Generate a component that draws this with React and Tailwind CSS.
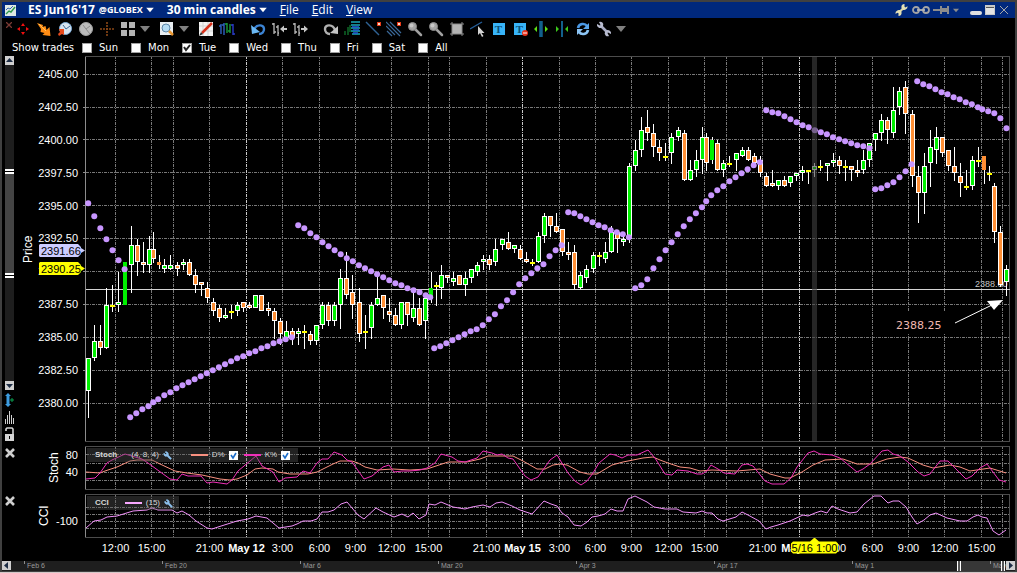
import React from 'react';
import clsx from 'clsx';
import { Wrench } from 'lucide-react';

const GRID_X = [115, 151, 173, 209, 246, 282, 319, 355, 391, 428, 449, 486, 522, 559, 595, 631, 668, 704, 726, 762, 799, 835, 872, 908, 944, 981, 1002];
const DAY_START = [246, 522, 799];
const PRICE_Y = [74, 107, 139, 172, 205, 238, 271, 304, 337, 370, 403];
const PRICES = ['2405.00', '2402.50', '2400.00', '2397.50', '2395.00', '2392.50', '2390.00', '2387.50', '2385.00', '2382.50', '2380.00'];
const DAYS = ['Sun', 'Mon', 'Tue', 'Wed', 'Thu', 'Fri', 'Sat', 'All'];
const RANGE = ['Feb 6', 'Feb 20', 'Mar 6', 'Mar 20', 'Apr 3', 'Apr 17', 'May 1', 'May 15'];

const TIMES = [
    [115, '12:00'], [151, '15:00'], [209, '21:00'], [246, 'May 12'], [282, '3:00'], [319, '6:00'], [355, '9:00'],
    [391, '12:00'], [428, '15:00'], [486, '21:00'], [522, 'May 15'], [559, '3:00'], [595, '6:00'], [631, '9:00'],
    [668, '12:00'], [704, '15:00'], [762, '21:00'], [799, 'May 16'], [835, '3:00'], [872, '6:00'], [908, '9:00'],
    [944, '12:00'], [981, '15:00'],
];

// x, kind (G up, O down, Y flat, g/o without outline), high, top, bottom, low
const CANDLES = [
    [88, 'G', 358, 358, 391, 418], [94, 'G', 325, 341, 358, 361], [100, 'O', 325, 341, 348, 355], [106, 'G', 288, 305, 348, 349],
    [112, 'Y', 285, 306, 306, 312], [118, 'G', 272, 302, 305, 312], [125, 'g', 262, 262, 305, 305], [131, 'G', 226, 245, 265, 293],
    [137, 'O', 239, 245, 262, 276], [143, 'O', 242, 262, 265, 273], [149, 'G', 236, 249, 265, 273], [153, 'O', 232, 249, 259, 263],
    [159, 'o', 255, 262, 265, 269], [164, 'G', 259, 265, 269, 273], [170, 'G', 255, 265, 269, 270], [177, 'O', 262, 265, 269, 276],
    [183, 'G', 259, 262, 265, 270], [189, 'O', 259, 262, 275, 276], [195, 'O', 269, 275, 285, 293], [201, 'O', 282, 282, 285, 296],
    [207, 'O', 282, 288, 298, 303], [213, 'O', 298, 302, 311, 316], [219, 'O', 305, 308, 318, 322], [225, 'G', 308, 315, 318, 319],
    [231, 'Y', 305, 312, 312, 319], [237, 'G', 302, 305, 311, 316], [243, 'O', 302, 302, 308, 312], [249, 'O', 302, 305, 308, 309],
    [255, 'G', 295, 295, 308, 308], [261, 'O', 295, 295, 311, 311], [268, 'O', 302, 308, 311, 316], [274, 'O', 308, 311, 321, 339],
    [280, 'O', 318, 321, 334, 345], [286, 'G', 321, 331, 338, 339], [292, 'O', 328, 331, 338, 345], [298, 'G', 328, 331, 334, 345],
    [304, 'Y', 325, 332, 332, 349], [310, 'O', 331, 334, 341, 345], [316, 'G', 325, 325, 341, 345], [322, 'G', 302, 305, 325, 329],
    [328, 'O', 302, 305, 321, 326], [334, 'G', 302, 305, 321, 326], [340, 'G', 269, 278, 305, 329], [346, 'O', 252, 278, 295, 299],
    [352, 'O', 275, 292, 305, 319], [359, 'O', 288, 302, 334, 342], [365, 'Y', 315, 332, 332, 349], [371, 'G', 302, 305, 328, 339],
    [377, 'G', 275, 298, 305, 306], [383, 'O', 295, 295, 308, 319], [389, 'O', 298, 311, 315, 322], [395, 'O', 308, 315, 325, 326],
    [401, 'G', 302, 302, 325, 329], [407, 'O', 302, 302, 315, 326], [413, 'G', 290, 308, 318, 322], [419, 'O', 298, 308, 325, 326],
    [425, 'G', 295, 298, 321, 339], [431, 'g', 272, 288, 298, 303], [436, 'Y', 282, 286, 286, 306], [441, 'G', 265, 275, 288, 299],
    [447, 'O', 275, 275, 278, 283], [453, 'G', 272, 278, 282, 286], [459, 'O', 275, 275, 285, 285], [465, 'G', 272, 278, 285, 296],
    [471, 'G', 269, 269, 278, 283], [477, 'G', 262, 265, 272, 276], [483, 'G', 255, 259, 262, 270], [489, 'O', 255, 259, 265, 270],
    [495, 'G', 239, 249, 262, 266], [502, 'G', 239, 239, 245, 250], [508, 'O', 232, 242, 249, 250], [514, 'G', 245, 245, 249, 253],
    [520, 'O', 245, 249, 259, 260], [526, 'O', 252, 259, 262, 263], [532, 'Y', 259, 263, 263, 266], [538, 'G', 232, 236, 262, 263],
    [544, 'G', 213, 216, 236, 243], [550, 'O', 216, 216, 226, 237], [556, 'O', 213, 226, 232, 233], [562, 'O', 229, 229, 252, 256],
    [568, 'O', 242, 252, 255, 260], [574, 'O', 245, 252, 285, 289], [580, 'G', 272, 275, 288, 289], [586, 'G', 265, 269, 278, 283],
    [593, 'G', 252, 255, 269, 273], [599, 'Y', 252, 256, 256, 266], [605, 'G', 242, 252, 259, 263], [611, 'G', 226, 232, 252, 253],
    [617, 'O', 232, 232, 239, 253], [623, 'G', 236, 239, 242, 246], [629, 'G', 163, 166, 239, 243], [635, 'G', 140, 150, 166, 171],
    [641, 'G', 117, 130, 150, 157], [647, 'O', 110, 127, 133, 141], [653, 'O', 124, 133, 147, 157], [659, 'O', 140, 147, 153, 161],
    [665, 'Y', 143, 157, 157, 161], [671, 'G', 133, 137, 153, 164], [678, 'G', 127, 130, 137, 141], [684, 'O', 130, 133, 180, 181],
    [690, 'G', 160, 170, 180, 181], [696, 'G', 150, 160, 170, 177], [702, 'G', 127, 137, 160, 174], [706, 'O', 133, 137, 163, 171],
    [712, 'g', 137, 140, 160, 164], [717, 'O', 140, 143, 170, 171], [723, 'G', 160, 163, 170, 177], [729, 'Y', 156, 164, 164, 167],
    [736, 'G', 153, 153, 160, 171], [742, 'G', 147, 150, 156, 157], [748, 'O', 147, 150, 160, 161], [754, 'O', 153, 156, 163, 163],
    [760, 'O', 156, 160, 173, 177], [766, 'O', 173, 176, 186, 187], [772, 'O', 170, 183, 186, 187], [778, 'G', 180, 180, 186, 190],
    [784, 'O', 176, 180, 186, 187], [790, 'G', 176, 176, 183, 187], [796, 'G', 173, 173, 176, 181], [802, 'G', 166, 170, 173, 181],
    [808, 'Y', 170, 171, 171, 184], [814, 'G', 163, 166, 170, 177], [820, 'Y', 160, 167, 167, 171], [827, 'G', 163, 163, 166, 181],
    [833, 'G', 153, 160, 163, 167], [839, 'O', 156, 160, 166, 174], [845, 'Y', 160, 167, 167, 181], [851, 'O', 166, 166, 170, 181],
    [857, 'O', 160, 170, 173, 177], [863, 'G', 150, 160, 170, 174], [869, 'G', 143, 143, 160, 167], [875, 'G', 133, 133, 140, 151],
    [881, 'G', 114, 120, 133, 141], [887, 'O', 117, 120, 130, 144], [893, 'G', 87, 110, 133, 138], [899, 'G', 87, 91, 107, 115],
    [905, 'O', 81, 87, 114, 134], [912, 'O', 110, 114, 176, 187], [918, 'O', 166, 176, 193, 223], [924, 'G', 153, 166, 193, 214],
    [930, 'G', 130, 147, 163, 187], [936, 'G', 127, 137, 150, 164], [942, 'O', 137, 137, 153, 157], [948, 'O', 150, 150, 166, 171],
    [954, 'O', 147, 166, 173, 181], [960, 'O', 163, 176, 183, 197], [966, 'Y', 170, 187, 187, 190], [972, 'G', 156, 160, 186, 190],
    [978, 'Y', 147, 161, 161, 167], [984, 'o', 156, 156, 170, 184], [989, 'Y', 166, 174, 174, 181], [994, 'O', 183, 186, 232, 243],
    [1000, 'O', 226, 232, 285, 287], [1006, 'G', 265, 269, 282, 296],
];

const FILL = { G: '#00f000', g: '#00f000', O: '#ff8f35', o: '#ff8f35', Y: '#ffff00' };

// parabolic dots: start x and one y per bar
const SAR = [
    [88, [203, 216, 228, 239, 250, 260, 269]],
    [130, [417, 413, 409, 406]],
    [153, [402]],
    [158, [399, 395, 392, 388, 385, 382, 379, 376, 373, 370, 367, 364, 361, 358, 356, 353, 351, 348, 346, 343, 341, 339, 337]],
    [298, [225, 228, 233, 237, 242, 246, 250, 254, 258, 261, 265, 268, 271, 274, 277, 280, 283, 285, 288, 290, 292, 295]],
    [430, [297]],
    [434, [348, 346, 343, 340, 337, 334, 331, 329, 325, 319, 314, 306, 300, 292, 284, 278, 273, 268, 264, 256, 250, 245]],
    [568, [212, 213, 216, 219, 222, 225, 227, 230, 232, 234, 237]],
    [635, [288, 285, 279, 268, 259, 250, 242, 234, 226, 219, 213, 207]],
    [706, [201]],
    [711, [195, 190, 186, 181, 177, 173, 169, 165, 162]],
    [766, [110, 112, 113, 116, 119, 122, 125, 127, 130, 132, 134, 137, 139, 141, 143, 145, 146, 148]],
    [875, [189, 188, 185, 182, 177, 171, 164]],
    [917, [81, 84, 86, 89, 92, 94, 97, 99, 102, 104, 107]],
    [982, [109]],
    [988, [111, 113, 118, 128]],
];
const STEP = 6.07;

const STOCH_D = '86,472 100,473 105,471 117,467 130,461 137,460 152,460 160,464 175,471 187,473 202,475 220,479 230,480 237,479 247,475 255,469 262,468 273,469 278,472 290,474 308,474 317,472 325,468 333,464 340,461 352,461 358,463 365,467 377,470 393,469 410,470 427,469 433,467 448,462 467,462 480,459 488,456 513,456 523,461 537,469 545,469 553,465 560,464 567,465 580,472 588,474 597,474 602,471 612,465 623,462 643,458 653,457 660,460 668,463 680,467 690,468 700,471 712,470 737,471 760,469 770,474 785,478 790,478 802,472 813,465 825,460 843,459 857,464 873,464 887,459 900,457 908,458 923,465 933,468 950,465 960,467 970,471 990,468 1006,473';
const STOCH_K = '86,479 95,478 100,473 107,463 112,460 125,454 142,459 148,463 170,479 177,480 182,474 188,476 201,476 207,483 213,482 227,484 232,480 238,471 256,456 262,466 273,472 279,482 285,478 297,477 303,471 310,473 317,463 322,459 328,459 334,452 342,455 347,460 352,462 364,479 372,476 383,467 389,465 394,472 402,471 410,471 420,470 427,468 435,463 441,454 452,457 458,461 465,462 477,458 483,451 492,453 497,455 502,454 508,458 513,459 525,476 531,480 538,477 550,460 557,455 568,473 575,481 581,485 587,481 593,473 599,463 610,454 615,455 622,458 628,455 637,455 648,450 655,458 665,474 672,475 677,470 688,471 697,474 702,474 707,471 711,465 718,469 724,473 735,474 742,465 747,464 753,466 765,481 772,484 784,484 791,478 797,467 808,453 814,451 820,454 832,455 840,458 857,472 863,469 870,464 882,451 888,450 893,454 900,456 908,462 918,472 924,476 930,474 940,461 948,461 966,479 972,476 980,468 987,464 999,480 1006,482';
const CCI_LINE = '86,528 94,521 101,520 107,517 117,516 133,511 147,510 152,508 158,510 172,510 177,513 182,511 189,515 196,521 207,528 212,529 218,527 237,521 248,519 256,516 267,518 279,528 292,526 297,524 303,521 311,521 317,519 322,512 328,512 334,510 341,504 347,502 358,515 364,519 376,508 383,512 394,517 402,514 408,517 413,513 419,519 426,515 429,504 435,505 441,502 453,507 465,509 472,507 483,505 490,507 496,503 502,502 512,506 520,510 532,514 544,501 551,504 557,506 562,513 568,517 574,525 581,526 587,522 592,517 598,516 605,514 611,509 617,511 623,511 628,499 635,496 647,502 654,507 665,509 677,509 683,512 696,513 702,511 707,513 712,513 718,519 723,521 736,517 742,512 748,515 759,521 766,529 771,527 778,525 790,521 803,515 808,516 815,513 821,511 827,513 832,506 838,509 850,513 857,512 864,504 869,500 874,496 881,496 888,503 893,501 899,501 906,507 912,517 917,524 924,520 930,515 936,513 947,518 960,521 967,521 973,517 978,515 982,517 987,518 993,531 999,535 1006,530';

const Icon = ({ children, className = 'size-4' }) => (
    <svg viewBox="0 0 16 16" className={clsx('shrink-0', className)} fill="none">{children}</svg>
);

const Caret = ({ className, color = '#fff' }) => (
    <svg viewBox="0 0 10 8" className={className}><path d="M0 1h10L5 7z" fill={color} /></svg>
);

const BarsIcon = ({ flip }) => (
    <Icon>
        <path d="M3 2v11M1 3h2M3 11h2M7 4v11M5 6h2M7 12h1" stroke="#b8b8b8" strokeWidth="1.3" />
        <path d={flip ? 'M9 7h3V4.500l4 3.500-4 3.500V9H9z' : 'M16 7h-3V4.500L9 8l4 3.500V9h3z'} fill="#c4c4c4" />
    </Icon>
);

const ZoomIcon = () => (
    <Icon>
        <path d="M8 8l6 6" stroke="#a0a0a0" strokeWidth="2.500" strokeLinecap="round" />
        <circle cx="5.500" cy="5.500" r="4" fill="#a4a4a4" stroke="#8c8c8c" />
        <circle cx="4.500" cy="4.500" r="2" fill="#c8c8c8" />
    </Icon>
);

const TOOLS = [
    { name: 'Move', icon: <Icon><path d="M8 2l2 3H6zM8 14l2-3H6zM2 8l3-2v4zM14 8l-3-2v4z" fill="#f01010" /></Icon> },
    { name: 'Trade', icon: <Icon><path d="M1 2l6 2-.5 2 3-1 1 4 3-3 1 9-8-1 2-2-4-1 .5-3z" fill="#ff8c14" /><path d="M3 3l7 7" stroke="#ffc45a" /></Icon> },
    { name: 'Alert', icon: <Icon><circle cx="8.500" cy="7.500" r="6" fill="#d8e4f0" stroke="#7fb0de" /><path d="M9 8L6 4M9 8l4-3" stroke="#3a6a9a" /><path d="M2 8h5v6l-2-1-3 2-1-2 2-2z" fill="#e84a1c" /></Icon> },
    { name: 'Clock', icon: <Icon><circle cx="8" cy="8" r="6.500" fill="#bcbcbc" stroke="#a0a0a0" /><path d="M8 8L5 4M8 8l4-3M8 8l4 5" stroke="#8a8a8a" /></Icon> },
    { name: 'Crosshair', icon: <Icon><path d="M8 1v14M1 8h14" stroke="#8a4716" strokeWidth="1.600" strokeDasharray="2 1" /></Icon> },
    { name: 'Layout', icon: <Icon><path d="M1 1h6v6H1zM9 1h6v6H9zM1 9h6v6H1zM9 9h6v6H9z" fill="#b4b4b4" /></Icon> },
    { name: 'Layout menu', caret: true },
    { name: 'Find', icon: <Icon><path d="M1 1h13v13H1z" fill="#e8eef2" /><circle cx="7" cy="7" r="4" fill="#b4dcf4" stroke="#5c86a8" /><path d="M10 10l4 4" stroke="#e89630" strokeWidth="2.500" /></Icon> },
    { name: 'Find menu', caret: true },
    { name: 'Draw', icon: <Icon><path d="M1 1h14v14H1z" fill="#f4f4f4" /><path d="M1 5h14M1 10h14M5 1v14M10 1v14" stroke="#d2d2d2" /><path d="M4 12L14 2" stroke="#d8321c" strokeWidth="2.500" /><path d="M1 15l2-4 2 2z" fill="#333" /></Icon> },
    { name: 'Bars', wide: true, icon: <Icon><path d="M2 3v10M0 5h2M5 2v12M3 4h2" stroke="#2f62c4" strokeWidth="1.400" /><path d="M8 2v10M6 3h2M11 3v9M9 10h2" stroke="#1a9c3c" strokeWidth="1.400" /><path d="M14 3v11M12 4h2M14 13h2" stroke="#2a3cc8" strokeWidth="1.400" /></Icon> },
    { name: 'Undo', icon: <Icon><path d="M4 9c2-6 10-6 10-1 0 3-2 5-5 5" stroke="#3c84d4" strokeWidth="2.400" /><path d="M1 4l1 9 8-2z" fill="#6ab8f4" /></Icon> },
    { name: 'Compress bars', icon: <BarsIcon /> },
    { name: 'Expand bars', wide: true, icon: <BarsIcon flip /> },
    { name: 'Redo', icon: <Icon><path d="M12 9C10 3 2 3 2 8c0 3 2 5 5 5" stroke="#b0b0b0" strokeWidth="2.400" /><path d="M15 5v8l-8-1z" fill="#c4c4c4" /></Icon> },
    { name: 'Order book', icon: <Icon><path d="M7 1h9M7 4h9M7 7h9M7 10h9M8 13h8" stroke="#18a8b8" strokeWidth="1.400" /><path d="M8 6h7M9 9h6M9 12h5" stroke="#2458d8" strokeWidth="1.400" /><path d="M1 10v4M4 6v8M6 4v7" stroke="#149a3a" /></Icon> },
    { name: 'Trend line', icon: <Icon><path d="M1 1l13 13" stroke="#2f6294" strokeWidth="1.400" /><path d="M12 1h4v4h-4z" fill="#e83a18" /><path d="M13 2h2v2h-2z" fill="#ffd8c8" /></Icon> },
    { name: 'Parallel lines', icon: <Icon><path d="M0 1l14 14M4 1l11 11M0 5l9 9M1 10l5 5" stroke="#3a6898" strokeWidth="1.200" /><path d="M11 1h4v4h-4z" fill="#e83a18" /><path d="M12 2h2v2h-2z" fill="#ffd8c8" /></Icon> },
    { name: 'Zoom in', icon: <ZoomIcon /> },
    { name: 'Zoom out', icon: <ZoomIcon /> },
    { name: 'Select area', icon: <Icon><path d="M3 3h10v10H3z" fill="#b4b4b4" /><path d="M1 3h14M1 13h14M3 1v14M13 1v14" stroke="#8a8a8a" /></Icon> },
    { name: 'Edit line', icon: <Icon><path d="M0 8L12 1" stroke="#245c96" strokeWidth="1.400" /><path d="M8 5v9l2-2 2 4 1.500-1-2-3h3z" fill="#d4d4d4" /></Icon> },
    { name: 'Text', text: true },
    { name: 'Remove text', text: true, minus: true },
    { name: 'Widen', icon: <Icon><path d="M8 0v16" stroke="#12608c" strokeWidth="3.500" /><path d="M4 5v6L1 8zM12 5v6l3-3z" fill="#5ce014" /></Icon> },
    { name: 'Narrow', icon: <Icon><path d="M8 0v16" stroke="#12608c" strokeWidth="2" /><path d="M2 5v6l3-3zM14 5v6l-3-3z" fill="#3cc81c" /></Icon> },
    { name: 'Refresh', icon: <Icon><path d="M3 7c1-5 7-5 9-2" stroke="#4a98e4" strokeWidth="2.600" /><path d="M14 2v6H8z" fill="#5aa6ea" /><path d="M13 9c-1 5-7 5-9 2" stroke="#8cc4f4" strokeWidth="2.600" /><path d="M2 14V8h6z" fill="#8cc4f4" /></Icon> },
    {
        name: 'Settings',
        icon: (
            <Icon>
                <path d="M5 5l6 6" stroke="#a8acc4" strokeWidth="2.600" />
                <path d="M3 1a3 3 0 0 1 4 4 3 3 0 0 1-4.500 1.500A3 3 0 0 1 1 3l3 1.500L4.500 4zM13 15a3 3 0 0 1-4-4 3 3 0 0 1 4.500-1.500A3 3 0 0 1 15 13l-3-1.500-.5.5z" fill="#b8bcd0" />
            </Icon>
        ),
    },
    { name: 'Settings menu', caret: true },
];

const TextTool = ({ minus }) => (
    <span className="relative flex size-3 items-center justify-center bg-[#38b4f8] font-['Liberation_Serif',serif] text-[11px] leading-3 font-bold text-[#0a5078]">
        T
        {minus && (
            <svg viewBox="0 0 6 6" className="absolute -right-[2px] -bottom-px size-[6px]">
                <circle cx="3" cy="3" r="3" fill="#e8321c" /><path d="M1 3h4" stroke="#fff" />
            </svg>
        )}
    </span>
);

const TitleBar = () => (
    <header className="flex h-4 items-center bg-[#00287c] pr-[6px] pl-[3px] font-['Open_Sans',sans-serif] text-[12px] leading-4 text-white">
        <svg viewBox="0 0 11 11" className="mr-3 size-[11px] shrink-0">
            <path d="M0 0h11v11H0z" fill="#dfe9e4" />
            <path d="M1 9l3-3 2 1 4-5" stroke="#2f9a4c" strokeWidth="1.400" fill="none" />
            <path d="M1 5l2-2 2 1 3-3" stroke="#3468b4" fill="none" />
        </svg>
        <button className="flex items-center font-bold">
            ES Jun16'17<span className="ml-1 text-[9px]">@GLOBEX</span>
            <Caret className="ml-[3px] h-[6px] w-2" />
        </button>
        <button className="ml-[13px] flex items-center font-bold">
            30 min candles
            <Caret className="ml-[3px] h-[6px] w-2" />
        </button>
        <nav className="ml-[13px] flex gap-[13px]">
            {['File', 'Edit', 'View'].map((item) => (
                <button key={item}><u>{item[0]}</u>{item.slice(1)}</button>
            ))}
        </nav>
        <div className="ml-auto flex items-center">
            <button aria-label="Configure">
                <Icon className="h-3 w-[13px]">
                    <path d="M4 12l8-8" stroke="#d8d4a4" strokeWidth="2.800" />
                    <path d="M12 0a4 4 0 0 0-4 5 3.500 3.500 0 0 0 6 2 4 4 0 0 0 2-4l-3 1.500L12 4zM4 16a4 4 0 0 0 4-5 3.500 3.500 0 0 0-6-2 4 4 0 0 0-2 4l3-1.500L4 12z" fill="#e4e0b4" />
                </Icon>
            </button>
            <button aria-label="Link" className="ml-1">
                <svg viewBox="0 0 18 8" className="h-2 w-[18px]" fill="none">
                    <circle cx="4" cy="4" r="3" stroke="#a4a4a4" strokeWidth="1.800" />
                    <circle cx="14" cy="4" r="3" stroke="#a4a4a4" strokeWidth="1.800" />
                    <path d="M5 4h8" stroke="#b4b4b4" strokeWidth="1.800" />
                </svg>
            </button>
            <button aria-label="Pin" className="ml-[3px]">
                <svg viewBox="0 0 16 8" className="h-2 w-4"><path d="M0 3h7v2H0zM7 0h2v2h5V0h2v8h-2V6H9v2H7z" fill="#8c8c8c" /></svg>
            </button>
            <button aria-label="Pin menu" className="ml-1"><Caret className="h-[5px] w-[6px]" color="#8c8c8c" /></button>
            <button aria-label="Minimize" className="mt-[6px] ml-[11px] h-1 w-3 rounded-xs bg-[#e0e0e0]" />
            <button aria-label="Maximize" className="ml-[3px] h-[10px] w-[10px] border border-t-2 border-[#c8c8c8] bg-[#e4e4e4] shadow-[inset_0_1px_0_#555]" />
            <button aria-label="Close" className="ml-1">
                <svg viewBox="0 0 10 10" className="size-[10px]"><path d="M1 1l8 8M9 1l-8 8" stroke="#a8a8a8" /></svg>
            </button>
        </div>
    </header>
);

const Toolbar = () => (
    <div className="flex h-[22px] items-center">
        <button aria-label="Hide toolbar" className="flex w-[10px] justify-end self-start pt-1">
            <svg viewBox="0 0 6 6" className="size-[6px]"><path d="M0 0l6 6M6 0L0 6" stroke="#7a3a34" strokeWidth="1.300" /></svg>
        </button>
        {TOOLS.map((tool) => (
            <button
                key={tool.name}
                aria-label={tool.name}
                className={clsx('flex h-5 shrink-0 items-center justify-center', tool.caret ? 'mr-1 w-[14px]' : 'w-[21px]', tool.wide && 'mr-[10px]')}
            >
                {tool.caret && <Caret className="h-2 w-[10px]" color="#808080" />}
                {tool.text && <TextTool minus={tool.minus} />}
                {tool.icon}
            </button>
        ))}
    </div>
);

const TradeDays = () => (
    <div className="flex h-4 items-center pl-[10px] font-['DejaVu_Sans',sans-serif] text-[10px] leading-4 text-white">
        <span className="w-[70px]">Show trades</span>
        <div className="flex gap-[13px]">
            {DAYS.map((day) => (
                <label key={day} className="flex items-center gap-[7px]">
                    <span className="relative flex">
                        <input type="checkbox" defaultChecked={day === 'Tue'} className="peer size-[10px] appearance-none border border-[#a0a0a0] bg-white" />
                        <svg viewBox="0 0 10 10" className="pointer-events-none absolute inset-0 hidden size-[10px] peer-checked:block">
                            <path d="M2 4l2 3 4-5" stroke="#222" strokeWidth="2" fill="none" />
                        </svg>
                    </span>
                    {day}
                </label>
            ))}
        </div>
    </div>
);

const ArrowButton = ({ dir, label }) => {
    const paths = { up: 'M1 6h7L4.500 2z', down: 'M1 3h7L4.500 7z', left: 'M6 1v7L2 4.500z', right: 'M3 1v7l4-3.500z' };
    return (
        <button aria-label={label} className="size-[9px] shrink-0 bg-[#cfcfcf]">
            <svg viewBox="0 0 9 9" className="size-[9px]"><path d={paths[dir]} fill="#1c2c44" /></svg>
        </button>
    );
};

const PriceRail = () => (
    <div className="flex w-5 shrink-0 flex-col pl-[3px]">
        <ArrowButton dir="up" label="Scroll up" />
        <div className="flex h-[316px] w-[9px] flex-col bg-[#1e1e1e] pt-[104px]">
            <div className="flex h-[109px] flex-col justify-between bg-[#444]">
                <i className="h-[5px] border-y-2 border-white bg-black" />
                <i className="h-[5px] border-y-2 border-white bg-black" />
            </div>
        </div>
        <ArrowButton dir="down" label="Scroll down" />
        <button aria-label="Fit price" className="mt-[3px]">
            <svg viewBox="0 0 9 14" className="h-[14px] w-[9px]"><path d="M3 0l3 3H4.500v8H6l-3 3-3-3h1.500V3H0z" fill="#3c9ce0" /><path d="M5 7h4M7 5v4" stroke="#0aa050" /></svg>
        </button>
        <button aria-label="Volume" className="mt-1">
            <svg viewBox="0 0 9 13" className="h-[13px] w-[9px]"><path d="M.5 8v5M2.500 4v9M4.500 0v13M6.500 4v9M8.500 7v6" stroke="#d0d0d0" /></svg>
        </button>
        <button aria-label="Lock scale" className="mt-[3px]">
            <svg viewBox="0 0 9 14" className="h-[14px] w-[9px]"><path d="M1 4V2l1-1h5l1 1v6" stroke="#d4d4d4" strokeWidth="1.600" fill="none" /><path d="M0 7h9v7H0z" fill="#d4d4d4" /><path d="M4.500 9v3" stroke="#000" /></svg>
        </button>
    </div>
);

const CloseRail = ({ label }) => (
    <div className="w-5 shrink-0 pt-[2px] pl-[3px]">
        <button aria-label={label} className="block">
            <svg viewBox="0 0 10 10" className="size-[10px]"><path d="M1 1l8 8M9 1l-8 8" stroke="#cfcfcf" strokeWidth="2.600" /></svg>
        </button>
    </div>
);

const AxisTitle = ({ children }) => (
    <span className="rotate-180 text-center text-[12px] leading-3 [writing-mode:vertical-rl]">{children}</span>
);

const PriceTag = ({ value, className, fill }) => (
    <div className={clsx('absolute -right-[3px] flex h-[13px] w-[46px] items-center pl-[2px] text-[11px] leading-3 text-black', className)}>
        <svg viewBox="0 0 46 13" className="absolute inset-0"><path d="M1 0h38l3 3v1l4 2.500-4 2.500v1l-3 3H1l-1-1V1z" fill={fill} /></svg>
        <span className="relative">{value}</span>
    </div>
);

const Grid = ({ top, bottom, rows }) => (
    <g shapeRendering="crispEdges">
        {rows.map((y) => (
            <line key={y} x1="86" x2="1009" y1={y + 0.5} y2={y + 0.5} stroke="#787878" strokeDasharray="3 1 1 1" />
        ))}
        {GRID_X.map((x) => (
            <line key={x} x1={x + 0.5} x2={x + 0.5} y1={top} y2={bottom} stroke={DAY_START.includes(x) ? '#c8c8c8' : '#787878'} strokeDasharray="3 1 1 1" />
        ))}
        <path d={`M85.500 ${top}V${bottom}`} stroke="#8c8c8c" />
        <path d={`M85 ${top + 0.5}H1009.500V${bottom - 0.5}H85`} stroke="#4c4c4c" fill="none" />
    </g>
);

const Candle = ({ x, kind, high, top, bottom, low }) => (
    <g>
        <rect x={x} y={high} width="1" height={low - high} fill="#fff" />
        {kind === 'Y' && <rect x={x - 2} y={top - 1} width="5" height="2" fill={FILL.Y} />}
        {(kind === 'g' || kind === 'o') && <rect x={x - 2} y={top} width="4" height={bottom - top} fill={FILL[kind]} />}
        {(kind === 'G' || kind === 'O') && (
            <>
                <rect x={x - 2} y={top} width="5" height={bottom - top} fill="#fff" />
                <rect x={x - 1} y={top + 1} width="3" height={bottom - top - 2} fill={FILL[kind]} />
            </>
        )}
    </g>
);

const PricePanel = () => (
    <section className="flex">
        <PriceRail />
        <div className="relative flex w-[60px] shrink-0">
            <AxisTitle>Price</AxisTitle>
            <div className="flex flex-1 flex-col justify-between pt-3 pr-1 pb-[33px] text-right text-[11px] leading-3">
                {PRICES.map((p) => <span key={p}>{p}</span>)}
            </div>
            <PriceTag value="2391.66" className="top-[188px]" fill="#ccccff" />
            <PriceTag value="2390.25" className="top-[206px]" fill="#ffff00" />
        </div>
        <svg viewBox="82 56 928 386" preserveAspectRatio="none" className="h-[386px] w-0 flex-1">
            <Grid top={56} bottom={442} rows={PRICE_Y} />
            <g shapeRendering="crispEdges">
                {PRICE_Y.map((y) => <rect key={y} x="83" y={y} width="3" height="1" fill="#8c8c8c" />)}
                <rect x="893" y="311" width="53" height="23" fill="#000" />
                <rect x="86" y="289" width="924" height="1" fill="#d4d4d4" />
            </g>
            <text x="975" y="287" fontSize="9" fill="#c4c4c4" fontFamily="Liberation Sans, sans-serif">2388.60</text>
            <g shapeRendering="crispEdges">
                {CANDLES.map(([x, kind, high, top, bottom, low]) => (
                    <Candle key={x} x={x} kind={kind} high={high} top={top} bottom={bottom} low={low} />
                ))}
            </g>
            {SAR.map(([start, ys]) => ys.map((y, i) => (
                <circle key={start + '-' + i} cx={start + i * STEP + 0.2} cy={y + 0.2} r="3" fill="#c896ff" />
            )))}
            <rect x="812" y="57" width="5" height="384" fill="#404040" fillOpacity="0.6" />
            <text x="896" y="329" fontSize="11" fill="#f0b8b0" fontFamily="DejaVu Sans, sans-serif">2388.25</text>
            <path d="M955 323L992 305" stroke="#fff" />
            <path d="M1003 300l-16 1 7 9z" fill="#fff" />
        </svg>
    </section>
);

const SmallWrench = () => (
    <Wrench className="size-[9px] -scale-x-100 fill-[#8cc0ec] text-[#8cc0ec]" strokeWidth={2} />
);

const LegendItem = ({ color, label }) => (
    <label className="flex items-center">
        <i className="mr-1 h-[2px] w-[17px]" style={{ background: color }} />
        {label}
        <span className="relative ml-1 flex">
            <input type="checkbox" defaultChecked className="peer size-[9px] appearance-none bg-white" />
            <svg viewBox="0 0 9 9" className="pointer-events-none absolute inset-0 hidden size-[9px] peer-checked:block">
                <path d="M2 4l2 3 3-5" stroke="#1c6cc8" strokeWidth="1.600" fill="none" />
            </svg>
        </span>
    </label>
);

const StochPanel = () => (
    <section className="mt-1 flex">
        <CloseRail label="Remove Stoch" />
        <div className="flex w-[60px] shrink-0 justify-end pr-1">
            <div className="mr-[6px] flex"><AxisTitle>Stoch</AxisTitle></div>
            <div className="flex flex-col gap-[5px] pt-[3px] text-[11px] leading-3">
                <span>80</span>
                <span>40</span>
            </div>
        </div>
        <div className="relative flex-1">
            <svg viewBox="82 446 928 44" preserveAspectRatio="none" className="h-11 w-full">
                <Grid top={446} bottom={490} rows={[454, 463, 472, 480]} />
                <polyline points={STOCH_D} stroke="#f89080" fill="none" />
                <polyline points={STOCH_K} stroke="#f030b8" fill="none" />
            </svg>
            <div className="absolute top-[2px] left-[5px] flex h-[14px] items-center bg-[#555]/40 pr-2 pl-2 text-[8px] leading-3 text-[#d8d8d8]">
                <b className="mr-[14px]">Stoch</b>
                <span className="mr-1">(4, 8, 4)</span>
                <SmallWrench />
                <div className="ml-[19px] flex gap-[6px]">
                    <LegendItem color="#f89080" label="D%" />
                    <LegendItem color="#f030b8" label="K%" />
                </div>
            </div>
        </div>
    </section>
);

const CciPanel = () => (
    <section className="mt-1 flex">
        <CloseRail label="Remove CCI" />
        <div className="flex w-[60px] shrink-0 justify-end pr-1">
            <div className="mr-[6px] flex"><AxisTitle>CCI</AxisTitle></div>
            <span className="pt-[21px] text-[11px] leading-3">-100</span>
        </div>
        <div className="relative flex-1">
            <svg viewBox="82 494 928 44" preserveAspectRatio="none" className="h-11 w-full">
                <Grid top={494} bottom={538} rows={[507, 514, 521, 528]} />
                <polyline points={CCI_LINE} stroke="#f090f8" fill="none" />
            </svg>
            <div className="absolute top-[2px] left-[5px] flex h-[14px] items-center bg-[#555]/40 pr-[6px] pl-2 text-[8px] leading-3 text-[#d8d8d8]">
                <b className="mr-4">CCI</b>
                <i className="mr-1 h-[2px] w-[17px] bg-[#f8a8ff]" />
                <span className="mr-1">(15)</span>
                <SmallWrench />
            </div>
        </div>
    </section>
);

const TimeAxis = () => (
    <div className="flex pl-20">
        <svg viewBox="82 538 928 23" preserveAspectRatio="none" className="h-[23px] w-0 flex-1 overflow-visible" fontFamily="Liberation Sans, sans-serif" fontSize="11" textAnchor="middle" fill="#fff">
            {TIMES.map(([x, label]) => (
                <text key={x} x={x + 0.5} y="552" fontWeight={label.startsWith('May') ? 700 : 400}>{label}</text>
            ))}
            <path d="M810 541.500l4.500-4 4.500 4h17l2 2v8l-2 2h-43l-2-2v-8l2-2z" fill="#ffff00" />
            <text x="814.500" y="552" fill="#000">5/16 1:00</text>
        </svg>
    </div>
);

const RangeBar = () => (
    <footer className="flex h-[10px] bg-[#1e1e1e]">
        <ArrowButton dir="left" label="Scroll left" />
        <div className="relative flex flex-1 overflow-hidden pl-[13px]">
            {RANGE.map((d) => (
                <div key={d} className="flex w-[138px] shrink-0 gap-[2px] text-[7px] leading-[10px] text-[#9a9a9a]">
                    <i className="h-[3px] w-px bg-[#8c8c8c]" />{d}
                </div>
            ))}
            <div className="absolute top-0 right-px flex h-[10px] w-[48px] justify-between bg-[#999]/20">
                <i className="w-1 border-x border-white bg-[#555]" />
                <i className="w-1 border-x border-white bg-[#555]" />
            </div>
        </div>
        <ArrowButton dir="right" label="Scroll right" />
    </footer>
);

const App = () => (
    <div className="min-h-screen border-b border-[#d4c8c8] bg-black">
        <main className="flex flex-col border-2 border-b border-[#404040] bg-black font-['Liberation_Sans',sans-serif] text-white">
            <TitleBar />
            <Toolbar />
            <TradeDays />
            <div className="pr-[5px]">
                <PricePanel />
                <StochPanel />
                <CciPanel />
                <TimeAxis />
            </div>
            <RangeBar />
        </main>
    </div>
);

export default App;
